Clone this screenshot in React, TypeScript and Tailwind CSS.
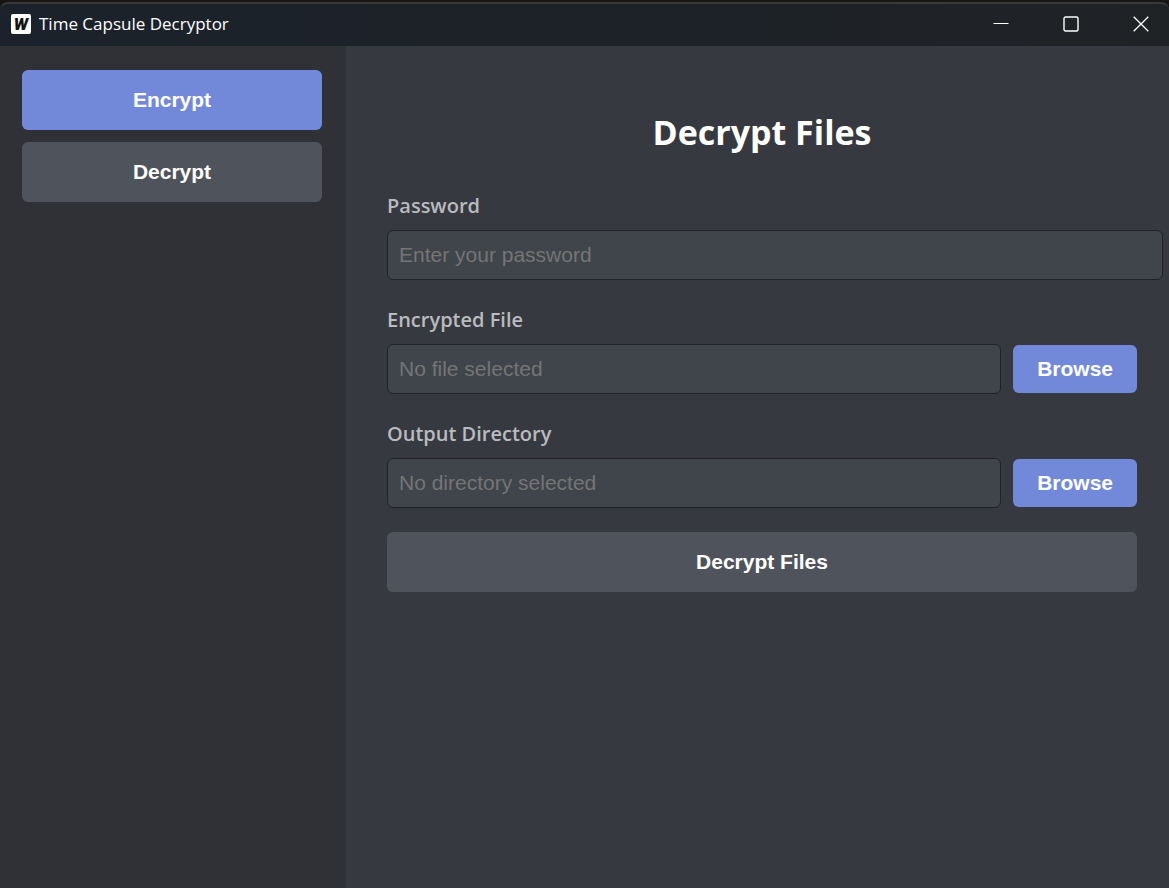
import { useState, type ReactNode } from "react";

const arial = "font-['Liberation_Sans',Arial,sans-serif]";
const fieldClass =
  "h-[50px] rounded-md border border-[#202225] bg-[#40444b] px-[11px] font-['Liberation_Sans',Arial,sans-serif] text-[21px] text-[#dcddde] placeholder:text-[#757575] outline-none";

function TitleBar() {
  return (
    <header className="bg-[#171614] pt-0.5">
      <div className="flex h-11 items-center justify-between rounded-t-lg border-t-2 border-[#3a3a3b] bg-linear-to-r from-[#1b222b] to-[#1f2225] pr-5 pb-0.5 pl-[11px] text-white">
        <div className="flex items-center gap-2">
          <span
            aria-hidden="true"
            className="flex size-5 items-center justify-center rounded-xs bg-white font-['Roboto',sans-serif] text-[17px] font-black italic leading-none text-[#141414]"
          >
            W
          </span>
          <span className="text-[17px] leading-6">Time Capsule Decryptor</span>
        </div>
        <div className="flex items-center gap-[54px]">
          <button aria-label="Minimize">
            <svg width="16" height="16" viewBox="0 0 16 16" fill="none" stroke="currentColor">
              <path d="M0.5 7.5H15.5" />
            </svg>
          </button>
          <button aria-label="Maximize">
            <svg width="16" height="16" viewBox="0 0 16 16" fill="none" stroke="currentColor" strokeWidth="1.4">
              <rect x="1" y="1" width="14" height="14" rx="1.5" />
            </svg>
          </button>
          <button aria-label="Close">
            <svg width="16" height="16" viewBox="0 0 16 16" fill="none" stroke="currentColor" strokeWidth="1.3">
              <path d="M0.7 0.7 15.3 15.3M15.3 0.7 0.7 15.3" />
            </svg>
          </button>
        </div>
      </div>
    </header>
  );
}

function Field({ id, label, children }: { id: string; label: string; children: ReactNode }) {
  return (
    <div className="flex flex-col gap-2">
      <label htmlFor={id} className="text-xl leading-8 font-semibold text-[#b9bbbe]">
        {label}
      </label>
      <div className="flex items-center gap-3">{children}</div>
    </div>
  );
}

function BrowseButton({ target }: { target: string }) {
  return (
    <button
      type="button"
      aria-describedby={target}
      className={`${arial} h-12 shrink-0 rounded-md bg-[#7289da] px-6 text-[21px] font-bold text-white`}
    >
      Browse
    </button>
  );
}

export default function App() {
  const [password, setPassword] = useState("");

  return (
    <div className="flex min-h-screen flex-col bg-[#36393f] font-['Open_Sans','Noto_Sans',sans-serif]">
      <TitleBar />
      <div className="flex grow">
        <nav className={`${arial} flex w-[346px] shrink-0 flex-col gap-3 bg-[#2f3136] pt-6 pr-6 pl-[22px]`}>
          <button className="h-[60px] rounded-md bg-[#7289da] text-[21px] font-bold text-white">Encrypt</button>
          <button className="h-[60px] rounded-md bg-[#4f545c] text-[21px] font-bold text-white">Decrypt</button>
        </nav>
        <main className="min-w-0 grow pt-[62px] pr-8 pl-[41px]">
          <h1 className="mb-[34px] text-center text-[34px] leading-12 font-bold text-white">Decrypt Files</h1>
          <form className="flex flex-col gap-6" onSubmit={(e) => e.preventDefault()}>
            <Field id="password" label="Password">
              <input
                id="password"
                type="password"
                placeholder="Enter your password"
                value={password}
                onChange={(e) => setPassword(e.target.value)}
                className={`${fieldClass} w-[calc(100%+26px)] shrink-0`}
              />
            </Field>
            <Field id="encrypted-file" label="Encrypted File">
              <input
                id="encrypted-file"
                type="text"
                readOnly
                placeholder="No file selected"
                className={`${fieldClass} min-w-0 grow`}
              />
              <BrowseButton target="encrypted-file" />
            </Field>
            <Field id="output-directory" label="Output Directory">
              <input
                id="output-directory"
                type="text"
                readOnly
                placeholder="No directory selected"
                className={`${fieldClass} min-w-0 grow`}
              />
              <BrowseButton target="output-directory" />
            </Field>
            <button type="submit" className={`${arial} h-[60px] rounded-md bg-[#4f545c] text-[21px] font-bold text-white`}>
              Decrypt Files
            </button>
          </form>
        </main>
      </div>
    </div>
  );
}
